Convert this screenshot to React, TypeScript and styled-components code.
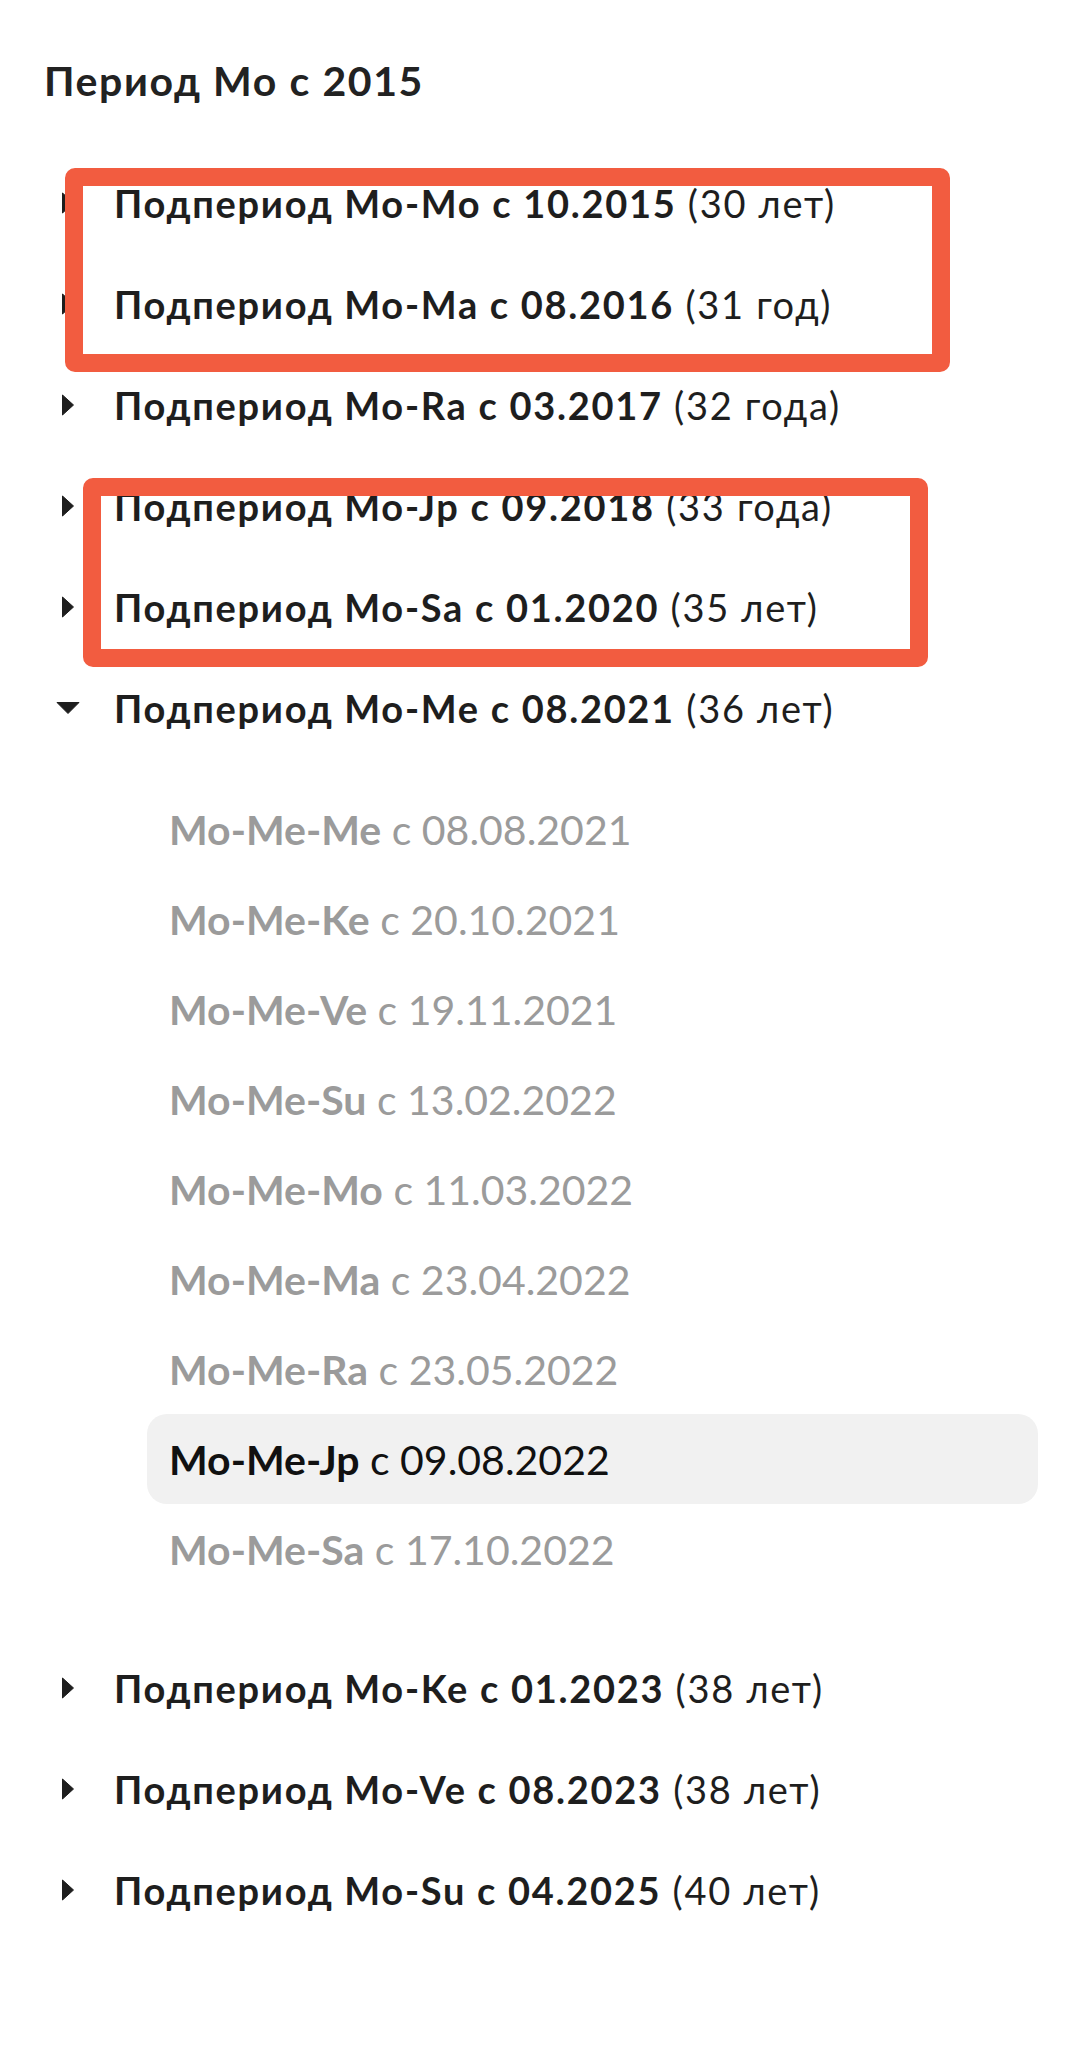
import React from 'react';
import styled, { createGlobalStyle } from 'styled-components';

const GlobalStyle = createGlobalStyle`
  html, body {
    margin: 0;
    padding: 0;
    background: #fff;
  }
  body {
    font-family: Lato, "Noto Sans", sans-serif;
    color: #1e1e1e;
  }
`;

interface Child {
  code: string;
  date: string;
  active?: boolean;
}

interface Period {
  code: string;
  date: string;
  age: string;
  children?: Child[];
}

const periods: Period[] = [
  { code: 'Mo-Mo', date: '10.2015', age: '30 лет' },
  { code: 'Mo-Ma', date: '08.2016', age: '31 год' },
  { code: 'Mo-Ra', date: '03.2017', age: '32 года' },
  { code: 'Mo-Jp', date: '09.2018', age: '33 года' },
  { code: 'Mo-Sa', date: '01.2020', age: '35 лет' },
  {
    code: 'Mo-Me',
    date: '08.2021',
    age: '36 лет',
    children: [
      { code: 'Mo-Me-Me', date: '08.08.2021' },
      { code: 'Mo-Me-Ke', date: '20.10.2021' },
      { code: 'Mo-Me-Ve', date: '19.11.2021' },
      { code: 'Mo-Me-Su', date: '13.02.2022' },
      { code: 'Mo-Me-Mo', date: '11.03.2022' },
      { code: 'Mo-Me-Ma', date: '23.04.2022' },
      { code: 'Mo-Me-Ra', date: '23.05.2022' },
      { code: 'Mo-Me-Jp', date: '09.08.2022', active: true },
      { code: 'Mo-Me-Sa', date: '17.10.2022' },
    ],
  },
  { code: 'Mo-Ke', date: '01.2023', age: '38 лет' },
  { code: 'Mo-Ve', date: '08.2023', age: '38 лет' },
  { code: 'Mo-Su', date: '04.2025', age: '40 лет' },
];

const Page = styled.div`
  position: relative;
  min-height: 2058px;
  padding: 57px 42px 0 0;
  box-sizing: border-box;
`;

const Title = styled.h1`
  margin: 0 0 47px 44px;
  font-size: 41px;
  line-height: 48px;
  font-weight: 700;
  letter-spacing: 1.6px;
  color: #222;
`;

const Tree = styled.div`
  display: flex;
  flex-direction: column;
`;

const Row = styled.div`
  display: flex;
  align-items: center;
  height: 101px;
`;

const Toggle = styled.span`
  display: flex;
  align-items: center;
  justify-content: center;
  width: 24px;
  margin: 0 34px 0 56px;
  color: #1e1e1e;
`;

const Label = styled.span`
  font-size: 38px;
  letter-spacing: 1.7px;
  color: #1e1e1e;
  white-space: nowrap;
`;

const Strong = styled.b`
  font-weight: 700;
`;

const ChildList = styled.div`
  display: flex;
  flex-direction: column;
  margin: 26px 0 43px 147px;
`;

const ChildRow = styled.div<{ $active?: boolean }>`
  display: flex;
  align-items: center;
  height: 90px;
  padding-left: 22px;
  border-radius: 20px;
  font-size: 41px;
  white-space: nowrap;
  color: ${(p) => (p.$active ? '#111' : '#9b9b9b')};
  background: ${(p) => (p.$active ? '#f1f1f1' : 'transparent')};
`;

const Spacer = styled.span`
  white-space: pre;
`;

const Marker = styled.div<{ $left: number; $top: number; $w: number; $h: number }>`
  position: absolute;
  left: ${(p) => p.$left}px;
  top: ${(p) => p.$top}px;
  width: ${(p) => p.$w}px;
  height: ${(p) => p.$h}px;
  box-sizing: border-box;
  border: 18px solid #f25c40;
  border-radius: 10px;
  pointer-events: none;
`;

const Caret: React.FC<{ open?: boolean }> = ({ open }) =>
  open ? (
    <svg width="24" height="12" viewBox="0 0 24 12">
      <path d="M1 0.5 H23 L12 11.5 Z" fill="currentColor" strokeLinejoin="round" stroke="currentColor" strokeWidth="1" />
    </svg>
  ) : (
    <svg width="12" height="22" viewBox="0 0 12 22">
      <path d="M0.5 1 V21 L11.5 11 Z" fill="currentColor" strokeLinejoin="round" stroke="currentColor" strokeWidth="1" />
    </svg>
  );

const App: React.FC = () => (
  <Page>
    <GlobalStyle />
    <Title>Период Mo с 2015</Title>
    <Tree>
      {periods.map((p) => (
        <React.Fragment key={p.code}>
          <Row>
            <Toggle>
              <Caret open={!!p.children} />
            </Toggle>
            <Label>
              <Strong>
                Подпериод {p.code} с {p.date}
              </Strong>{' '}
              ({p.age})
            </Label>
          </Row>
          {p.children && (
            <ChildList>
              {p.children.map((c) => (
                <ChildRow key={c.code} $active={c.active}>
                  <Strong>{c.code}</Strong>
                  <Spacer> </Spacer>с {c.date}
                </ChildRow>
              ))}
            </ChildList>
          )}
        </React.Fragment>
      ))}
    </Tree>
    {/* выделенные группы */}
    <Marker $left={65} $top={168} $w={885} $h={204} />
    <Marker $left={83} $top={478} $w={845} $h={189} />
  </Page>
);

export default App;
